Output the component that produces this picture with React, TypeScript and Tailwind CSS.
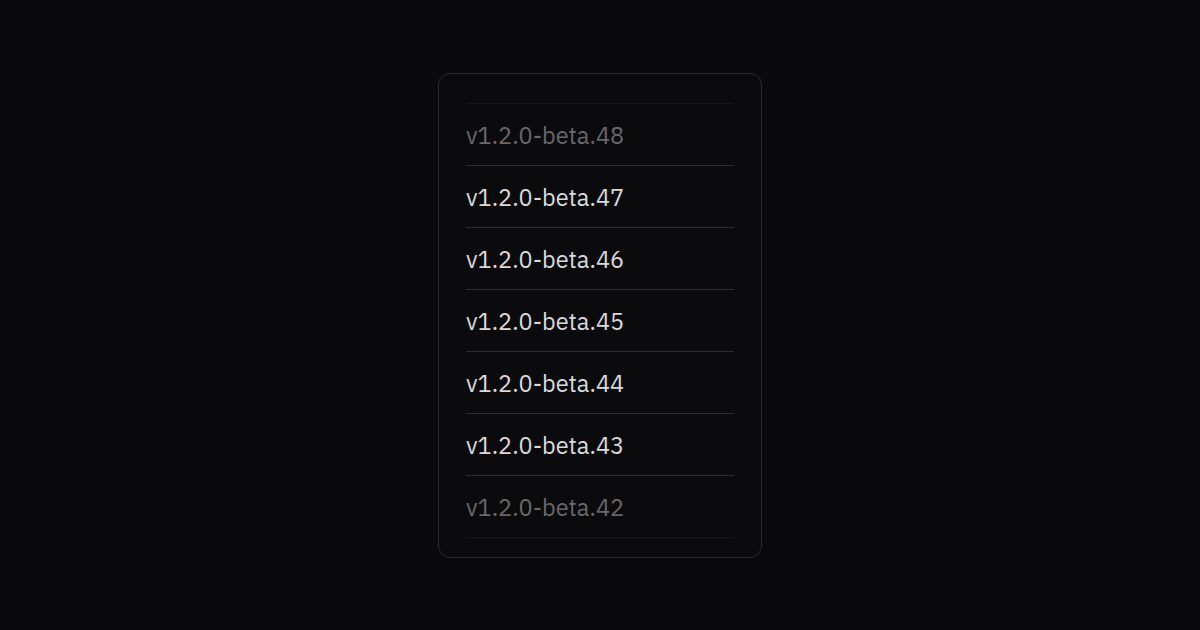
import React from "react";

const rows = [
  { v: "v1.2.0-beta.48", dim: true },
  { v: "v1.2.0-beta.47", dim: false },
  { v: "v1.2.0-beta.46", dim: false },
  { v: "v1.2.0-beta.45", dim: false },
  { v: "v1.2.0-beta.44", dim: false },
  { v: "v1.2.0-beta.43", dim: false },
  { v: "v1.2.0-beta.42", dim: true },
];

export default function App() {
  return (
    <div
      className="w-[1200px] h-[630px] bg-[#0a0a0c] flex items-start justify-center pt-[73px]"
      style={{ fontFamily: '"IBM Plex Sans", "Noto Sans", Inter, sans-serif' }}
    >
      <div className="w-[324px] h-[485px] rounded-[12px] border border-[#2b2b2e] bg-[#0b0b0d] pt-[29px] px-[27px]">
        <div className="border-b border-[#161618]">
          {rows.map((r, i) => (
            <div
              key={r.v}
              className={`h-[62px] flex items-center border-t ${i === 0 ? "border-[#161618]" : "border-[#2e2e31]"}`}
            >
              <span
                className={`text-[23.5px] leading-none pt-[3px] ${r.dim ? "text-[#68686c]" : "text-[#dadade]"}`}
              >
                {r.v}
              </span>
            </div>
          ))}
        </div>
      </div>
    </div>
  );
}
